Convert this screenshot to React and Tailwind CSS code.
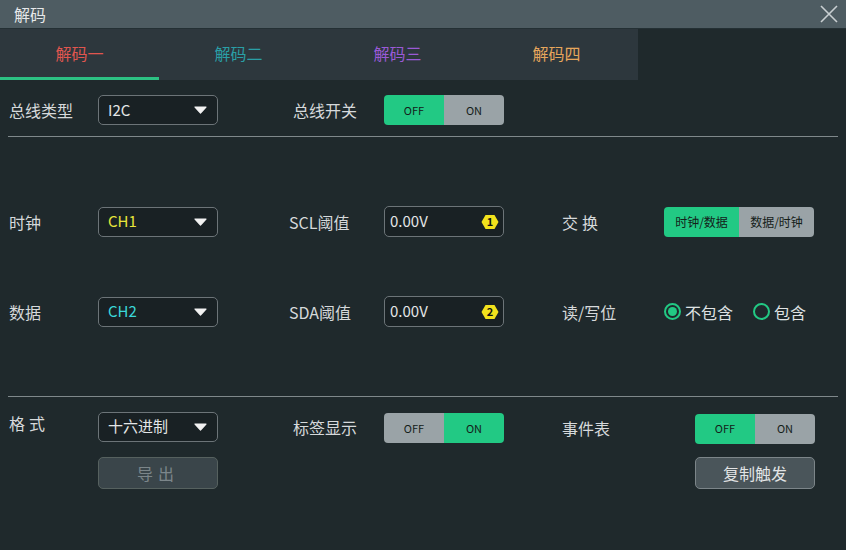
import React, { useState } from "react";

const font = { fontFamily: '"Noto Sans CJK SC", "Noto Sans", sans-serif' };

function Caret() {
  return (
    <svg width="13" height="8" viewBox="0 0 13 8" className="shrink-0">
      <path d="M1 1 H12 L6.5 7 Z" fill="#f2f2f2" stroke="#f2f2f2" strokeWidth="1.2" strokeLinejoin="round" />
    </svg>
  );
}

function Select({ value, color = "text-[#e4e6e7]" }) {
  return (
    <div className="w-[120px] h-[30px] rounded-[5px] border border-[#6c7478] bg-[#192124] flex items-center justify-between pl-[9px] pr-[10px]">
      <span className={`text-[15px] ${color}`}>{value}</span>
      <Caret />
    </div>
  );
}

function Toggle({ on, w = "w-[120px]", left = "OFF", right = "ON", small = "text-[11px]" }) {
  return (
    <div className={`${w} h-[30px] rounded-[4px] overflow-hidden flex ${small} text-[#142019]`}>
      <div className={`flex-1 flex items-center justify-center ${on ? "bg-[#9aa3a7]" : "bg-[#22c984]"}`}>
        {left}
      </div>
      <div className={`flex-1 flex items-center justify-center ${on ? "bg-[#22c984]" : "bg-[#9aa3a7]"}`}>
        {right}
      </div>
    </div>
  );
}

function Badge({ n }) {
  return (
    <svg width="18" height="16" viewBox="0 0 18 16">
      <polygon points="4.5,1 13.5,1 17.5,8 13.5,15 4.5,15 0.5,8" fill="#f2e21c" />
      <text x="9" y="12.2" textAnchor="middle" fontSize="11" fontWeight="700" fill="#111" style={font}>
        {n}
      </text>
    </svg>
  );
}

function Volt({ n }) {
  return (
    <div className="w-[120px] h-[31px] rounded-[5px] border border-[#6c7478] bg-[#192124] flex items-center justify-between pl-[5px] pr-[4px]">
      <span className="text-[15px] text-[#e4e6e7]">0.00V</span>
      <Badge n={n} />
    </div>
  );
}

function Radio({ checked, label }) {
  return (
    <div className="flex items-center gap-[4px]">
      <div className="w-[17px] h-[17px] rounded-full border-2 border-[#22c984] flex items-center justify-center">
        {checked && <div className="w-[9px] h-[9px] rounded-full bg-[#22c984]" />}
      </div>
      <span className="text-[16px] text-[#dfe2e3]">{label}</span>
    </div>
  );
}

const tabs = [
  { name: "解码一", color: "text-[#e0564f]" },
  { name: "解码二", color: "text-[#2a9fa6]" },
  { name: "解码三", color: "text-[#9a5ad6]" },
  { name: "解码四", color: "text-[#e6a65c]" },
];

export default function App() {
  const [tab, setTab] = useState(0);

  return (
    <div className="w-[846px] h-[550px] bg-[#1f292c] overflow-hidden text-[#d6d9db]" style={font}>
      {/* title */}
      <div className="h-[29px] bg-[#4e5c62] flex items-center justify-between pl-[14px] pr-[8px] border-b border-[#243034]">
        <span className="text-[16px] text-[#e6e8e9]">解码</span>
        <svg width="18" height="18" viewBox="0 0 18 18">
          <path d="M1 1 L17 17 M17 1 L1 17" stroke="#c9cfd2" strokeWidth="1.6" />
        </svg>
      </div>

      {/* tabs */}
      <div className="w-[638px] h-[51px] bg-[#2d373d] flex">
        {tabs.map((t, i) => (
          <div
            key={t.name}
            onClick={() => setTab(i)}
            className={`w-[159px] flex items-center justify-center text-[16px] border-b-[3px] ${t.color} ${
              tab === i ? "border-[#2cc183]" : "border-transparent"
            }`}
          >
            {t.name}
          </div>
        ))}
      </div>

      <div className="pt-[15px]">
        {/* row 1 */}
        <div className="h-[30px] flex items-center pl-[9px]">
          <span className="w-[89px] text-[16px]">总线类型</span>
          <Select value="I2C" />
          <span className="w-[166px] pl-[75px] text-[16px]">总线开关</span>
          <Toggle on={false} />
        </div>

        <div className="mt-[11px] mx-[8px] h-px bg-[#7f888b]" />

        {/* row 2 */}
        <div className="mt-[69px] h-[31px] flex items-center pl-[9px]">
          <span className="w-[89px] text-[16px]">时钟</span>
          <Select value="CH1" color="text-[#e8e53a]" />
          <span className="w-[166px] pl-[71px] text-[16px]">SCL阈值</span>
          <Volt n="1" />
          <span className="w-[160px] pl-[58px] text-[16px] tracking-[4px]">交换</span>
          <Toggle on={false} w="w-[150px]" left="时钟/数据" right="数据/时钟" small="text-[12px]" />
        </div>

        {/* row 3 */}
        <div className="mt-[59px] h-[31px] flex items-center pl-[9px]">
          <span className="w-[89px] text-[16px]">数据</span>
          <Select value="CH2" color="text-[#3bd7d9]" />
          <span className="w-[166px] pl-[71px] text-[16px]">SDA阈值</span>
          <Volt n="2" />
          <span className="w-[160px] pl-[58px] text-[16px]">读/写位</span>
          <div className="flex items-center gap-[20px]">
            <Radio checked label="不包含" />
            <Radio label="包含" />
          </div>
        </div>

        <div className="mt-[69px] mx-[8px] h-px bg-[#7f888b]" />

        {/* row 4 */}
        <div className="mt-[14px] h-[31px] flex items-center pl-[9px]">
          <span className="w-[89px] text-[16px] tracking-[4px] self-start">格式</span>
          <Select value="十六进制" />
          <span className="w-[166px] pl-[75px] text-[16px]">标签显示</span>
          <div className="mt-[3px]">
            <Toggle on />
          </div>
          <span className="w-[191px] pl-[58px] text-[16px] mt-[3px]">事件表</span>
          <div className="mt-[4px]">
            <Toggle on={false} />
          </div>
        </div>

        {/* row 5 */}
        <div className="mt-[15px] h-[32px] flex items-center pl-[98px]">
          <div className="w-[120px] h-[32px] rounded-[5px] border border-[#56615f] bg-[#3a454a] flex items-center justify-center text-[16px] text-[#7c868a] tracking-[5px]">
            导出
          </div>
          <div className="ml-[477px] w-[120px] h-[32px] rounded-[5px] border border-[#7c8589] bg-[#4a555a] flex items-center justify-center text-[16px] text-[#e2e4e5]">
            复制触发
          </div>
        </div>
      </div>
    </div>
  );
}
